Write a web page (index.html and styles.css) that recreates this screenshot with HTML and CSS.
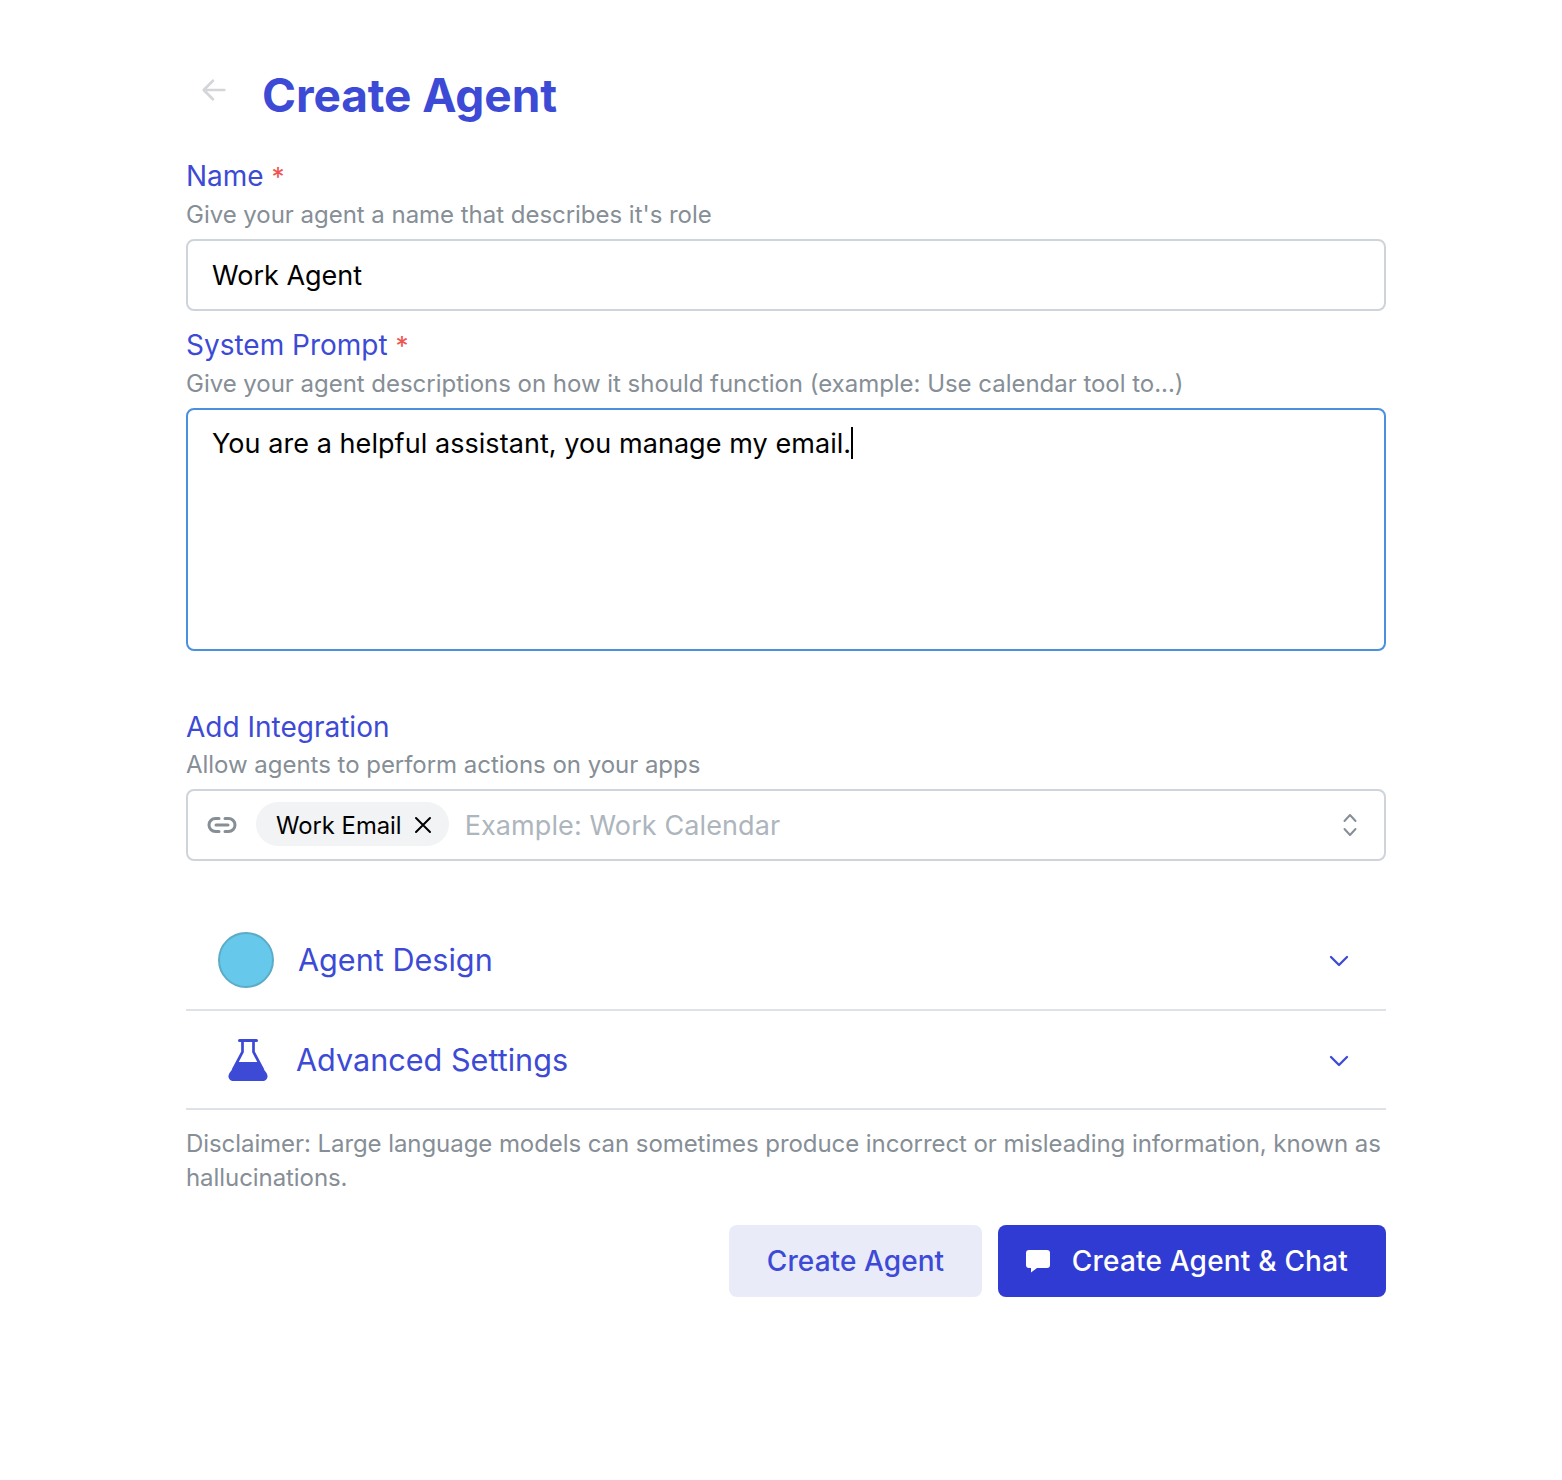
FILE: index.html
```html
<!DOCTYPE html>
<html lang="en">
<head>
  <meta charset="UTF-8">
  <title>Create Agent</title>
  <link rel="stylesheet" href="styles.css">
</head>
<body>
  <main class="page">
    <header class="title-row">
      <svg class="back-icon" viewBox="0 0 24 24" fill="none" stroke="currentColor" stroke-width="2.500" stroke-linecap="round" stroke-linejoin="round"><path d="M21.500 12H2.500M11 3.500L2.500 12l8.500 8.500"/></svg>
      <h1>Create Agent</h1>
    </header>

    <section class="field field-name">
      <div class="label">Name <span class="req">*</span></div>
      <div class="hint">Give your agent a name that describes it's role</div>
      <div class="input">Work Agent</div>
    </section>

    <section class="field field-prompt">
      <div class="label">System Prompt <span class="req">*</span></div>
      <div class="hint">Give your agent descriptions on how it should function (example: Use calendar tool to...)</div>
      <div class="textarea">You are a helpful assistant, you manage my email.<span class="caret"></span></div>
    </section>

    <section class="field field-integration">
      <div class="label">Add Integration</div>
      <div class="hint">Allow agents to perform actions on your apps</div>
      <div class="combo">
        <svg class="link-icon" viewBox="0 0 30 20" fill="none" stroke="currentColor" stroke-width="3" stroke-linecap="round"><path d="M12 3.500H8.500a6.500 6.500 0 0 0 0 13H12M18 3.500h3.500a6.500 6.500 0 0 1 0 13H18M9 10h12"/></svg>
        <span class="chip">Work Email
          <svg class="chip-x" viewBox="0 0 18 18" fill="none" stroke="currentColor" stroke-width="2" stroke-linecap="round"><path d="M2 2l14 14M16 2L2 16"/></svg>
        </span>
        <span class="placeholder">Example: Work Calendar</span>
        <svg class="updown" viewBox="0 0 16 28" fill="none" stroke="currentColor" stroke-width="2" stroke-linecap="round" stroke-linejoin="round"><path d="M2.500 10L8 4l5.500 6M2.500 18L8 24l5.500-6"/></svg>
      </div>
    </section>

    <section class="accordion">
      <div class="acc-row acc-design">
        <span class="swatch"></span>
        <span class="acc-title">Agent Design</span>
        <svg class="chevron" viewBox="0 0 20 12" fill="none" stroke="currentColor" stroke-width="2.300" stroke-linecap="round" stroke-linejoin="round"><path d="M2 2l8 8 8-8"/></svg>
      </div>
      <div class="acc-row acc-advanced">
        <svg class="flask" viewBox="0 0 40 44" fill="none"><path d="M11.500 2.500h17" stroke="currentColor" stroke-width="3" stroke-linecap="round"/><path d="M14.500 3v11L5 32M25.500 3v11L35 32" stroke="currentColor" stroke-width="2.700"/><path d="M9.500 24h21l8 11c2.500 4 0 8-4 8H5.500c-4 0-6.500-4-4-8z" fill="currentColor"/></svg>
        <span class="acc-title">Advanced Settings</span>
        <svg class="chevron" viewBox="0 0 20 12" fill="none" stroke="currentColor" stroke-width="2.300" stroke-linecap="round" stroke-linejoin="round"><path d="M2 2l8 8 8-8"/></svg>
      </div>
    </section>

    <p class="disclaimer">Disclaimer: Large language models can sometimes produce incorrect or misleading information, known as hallucinations.</p>

    <div class="actions">
      <button class="btn btn-light">Create Agent</button>
      <button class="btn btn-primary">
        <svg class="chat-icon" viewBox="0 0 26 24"><path d="M4 1h18a3 3 0 0 1 3 3v12a3 3 0 0 1-3 3H12l-6 4.500V19H4a3 3 0 0 1-3-3V4a3 3 0 0 1 3-3z" fill="currentColor"/></svg>
        Create Agent &amp; Chat
      </button>
    </div>
  </main>
</body>
</html>
```

FILE: styles.css
```css
* { box-sizing: border-box; }
body { margin: 0; background: #fff; font-family: Inter, "Liberation Sans", sans-serif; color: #000; }
.page { width: 1200px; margin-left: 186px; padding-top: 63px; }

.title-row { display: flex; align-items: center; height: 64px; margin-bottom: 32px; }
.back-icon { width: 26px; height: 26px; margin: 0 35px 0 15px; color: #d4d5d9; position: relative; top: -5px; }
h1 { margin: 0; font-size: 46px; line-height: 64px; font-weight: 700; color: #3d4ad6; letter-spacing: -0.1px; }

.label { font-size: 28px; line-height: 34px; color: #3d4ad6; }
.req { color: #ef5350; font-size: 26px; }
.hint { font-size: 24px; line-height: 34px; margin-top: 4px; color: #868e96; letter-spacing: -0.03px; }

.input { height: 72px; margin-top: 7px; padding: 0 24px; display: flex; align-items: center; border: 2px solid #ced4da; border-radius: 8px; font-size: 27px; }
.field-prompt { margin-top: 17px; }
.textarea { height: 243px; margin-top: 7px; padding: 16px 24px; border: 2px solid #4a90dc; border-radius: 8px; font-size: 27px; line-height: 36px; letter-spacing: 0.06px; }
.caret { display: inline-block; width: 2px; height: 32px; background: #000; vertical-align: -6px; }

.field-integration { margin-top: 59px; }
.combo { height: 72px; margin-top: 7px; padding: 0 26px 0 19px; display: flex; align-items: center; border: 2px solid #ced4da; border-radius: 8px; }
.link-icon { width: 30px; height: 20px; color: #868e96; flex: none; }
.chip { margin: 0 0 2px 19px; height: 44px; padding: 2px 17px 0 20px; display: flex; align-items: center; gap: 12px; border-radius: 22px; background: #f1f3f5; font-size: 23.800px; flex: none; }
.chip-x { width: 18px; height: 18px; }
.placeholder { margin-left: 16px; flex: 1; font-size: 27px; letter-spacing: 0.1px; color: #adb5bd; }
.updown { width: 16px; height: 28px; color: #868e96; flex: none; }

.accordion { margin-top: 50px; }
.acc-row { display: flex; align-items: center; height: 100px; border-bottom: 2px solid #dee2e6; }
.acc-design { height: 100px; padding-left: 32px; }
.acc-advanced { height: 99px; padding-left: 42px; }
.swatch { width: 56px; height: 56px; border-radius: 50%; background: #66c8ea; border: 2px solid #5cacc8; flex: none; }
.flask { width: 40px; height: 44px; color: #3d4ad6; flex: none; }
.acc-title { flex: 1; margin: 0 0 2px 24px; font-size: 30.600px; color: #3d4ad6; }
.acc-advanced .acc-title { margin: 0 0 0 28px; }
.chevron { width: 20px; height: 12px; margin: 2px 37px 0 0; color: #3d4ad6; flex: none; }

.disclaimer { margin: 17px 0 0; font-size: 24px; line-height: 34px; color: #868e96; letter-spacing: -0.07px; }

.actions { display: flex; justify-content: flex-end; gap: 16px; margin-top: 30px; }
.btn { height: 72px; padding: 0 38px; display: flex; align-items: center; border: 0; border-radius: 8px; font-family: inherit; font-size: 28px; font-weight: 500; }
.btn-light { background: #e9ebf9; color: #3d4ad6; padding: 0 37.500px; letter-spacing: 0.08px; }
.btn-primary { background: #2f3bd3; color: #fff; padding: 0 38px 0 27px; letter-spacing: 0.2px; }
.chat-icon { width: 26px; height: 24px; margin-right: 21px; }
```
